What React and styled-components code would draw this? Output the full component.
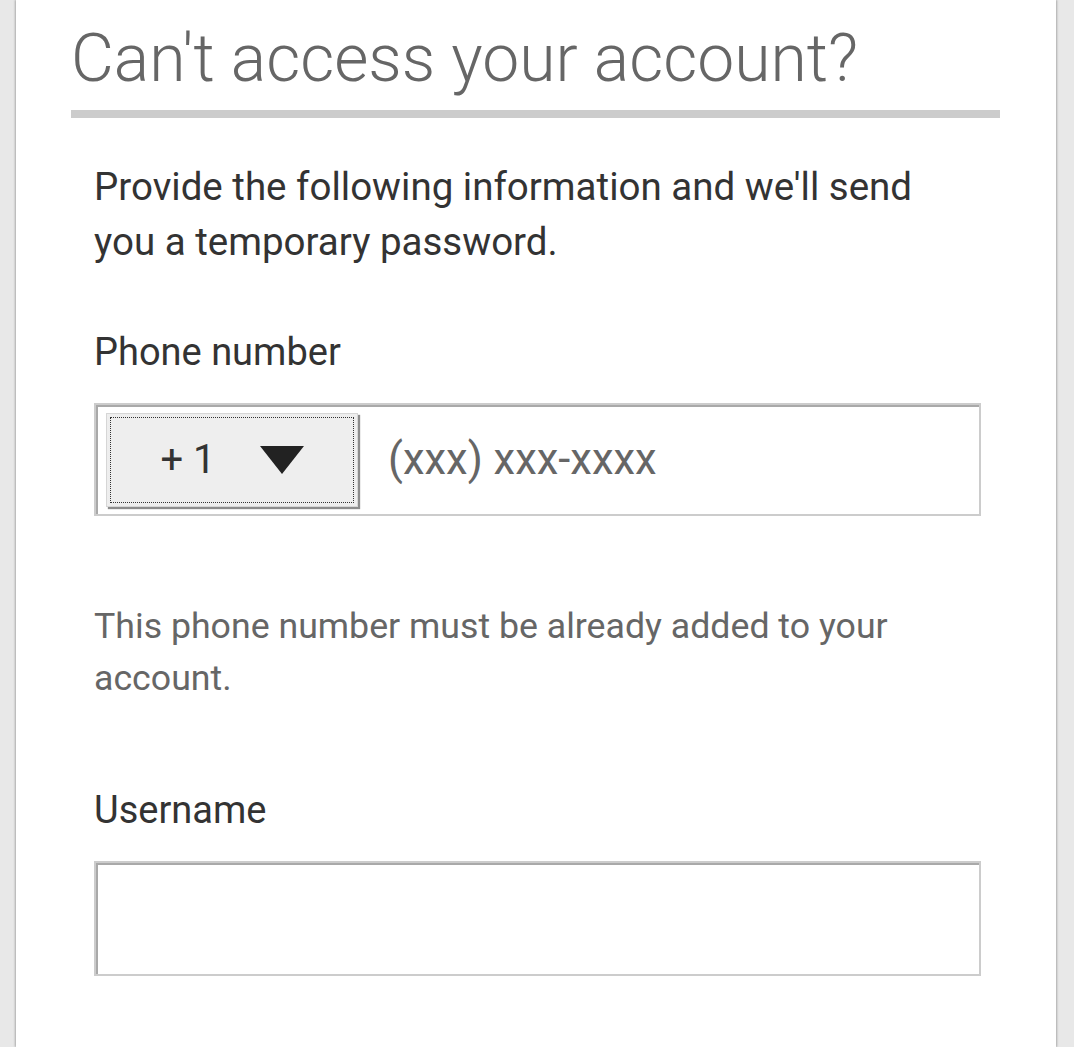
import React from 'react'
import styled, { createGlobalStyle } from 'styled-components'

const GlobalStyle = createGlobalStyle`
    html, body {
        margin: 0;
        padding: 0;
        background: #e8e8e8;
        font-family: Roboto, 'Noto Sans', sans-serif;
    }
`

const Page = styled.div`
    min-height: 1047px;
    display: flex;
    padding: 0 18px 0 16px;
`

const Card = styled.div`
    flex: 1;
    background: #ffffff;
    box-shadow: -1px 0 2px rgba(0,0,0,0.25), 1px 0 2px rgba(0,0,0,0.25);
    padding: 17px 56px 0 55px;
`

const Title = styled.h1`
    margin: 0;
    font-size: 66px;
    line-height: 84px;
    font-weight: 300;
    color: #666666;
    padding-bottom: 9px;
    border-bottom: 8px solid #cccccc;
`

const Body = styled.div`
    padding: 0 19px 0 23px;
    display: flex;
    flex-direction: column;
`

const Intro = styled.p`
    margin: 41px 0 0 0;
    font-size: 38.5px;
    line-height: 55px;
    color: #333333;
`

const Label = styled.label`
    display: block;
    margin-top: ${({ $top }) => $top}px;
    font-size: 38px;
    line-height: 44px;
    color: #333333;
`

const Box = styled.div`
    box-sizing: border-box;
    margin-top: 29px;
    height: ${({ $h }) => $h}px;
    border: 2px solid #cccccc;
    box-shadow: inset 2px 2px 0 #a9a9a9;
    display: flex;
    align-items: center;
    padding: 0 10px;
    gap: 30px;
`

const Select = styled.div`
    box-sizing: border-box;
    width: 252px;
    height: 94px;
    background: #eeeeee;
    border: 1px solid #d6d6d6;
    box-shadow: 2px 2px 1px #8c8c8c;
    outline: 1px dotted #333333;
    outline-offset: -5px;
    display: flex;
    align-items: center;
    justify-content: center;
    gap: 44px;
    font-size: 40px;
    color: #333333;
`

const Caret = styled.span`
    width: 0;
    height: 0;
    border-left: 22px solid transparent;
    border-right: 22px solid transparent;
    border-top: 28px solid #222222;
`

const Input = styled.input`
    flex: 1;
    min-width: 0;
    border: none;
    outline: none;
    background: transparent;
    font-family: Roboto, sans-serif;
    font-size: 43.5px;
    color: #333333;
    padding: 0;
    &::placeholder {
        color: #666666;
    }
`

const Hint = styled.p`
    margin: 84px 0 0 0;
    font-size: 35.7px;
    line-height: 52px;
    color: #666666;
`

const App = () => {
    return (
        <>
            <GlobalStyle />
            <Page>
                <Card>
                    <Title>Can't access your account?</Title>
                    <Body>
                        <Intro>Provide the following information and we'll send you a temporary password.</Intro>
                        <Label $top={61}>Phone number</Label>
                        <Box $h={113}>
                            <Select>
                                <span>+ 1</span>
                                <Caret />
                            </Select>
                            <Input placeholder="(xxx) xxx-xxxx" />
                        </Box>
                        <Hint>This phone number must be already added to your account.</Hint>
                        <Label $top={84}>Username</Label>
                        <Box $h={115}>
                            <Input />
                        </Box>
                    </Body>
                </Card>
            </Page>
        </>
    )
}

export default App
